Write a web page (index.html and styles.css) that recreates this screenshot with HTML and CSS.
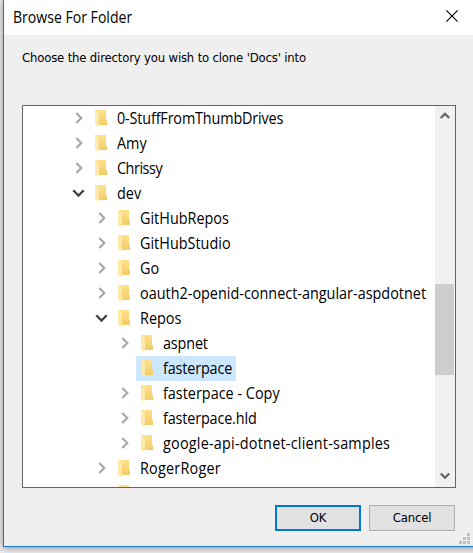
FILE: index.html
```html
<!DOCTYPE html>
<html lang="en">
<head>
<meta charset="utf-8">
<title>Browse For Folder</title>
<link rel="stylesheet" href="styles.css">
</head>
<body>
<svg class="defs" width="0" height="0" aria-hidden="true">
  <defs>
    <linearGradient id="gold" x1="0" y1="0" x2="0" y2="1"><stop offset="0" stop-color="#ffe18a"/><stop offset="1" stop-color="#f1cd69"/></linearGradient>
    <symbol id="folder" viewBox="0 0 12 17"><path d="M0 0h11v10h1v5H2z" fill="url(#gold)"/><path d="M0 0l4 2.300v12L3 17 0 14.500z" fill="#ffe9a9"/></symbol>
    <symbol id="closed" viewBox="0 0 14 14"><path d="M4.300 2l5 5-5 5" fill="none" stroke="#a6a6a6" stroke-width="2.100"/></symbol>
    <symbol id="open" viewBox="0 0 14 14"><path d="M1.300 4.300L6.500 9.500l5.200-5.200" fill="none" stroke="#404040" stroke-width="2.300"/></symbol>
  </defs>
</svg>
<div class="dialog">
  <header class="titlebar">
    <h1 class="title">Browse For Folder</h1>
    <svg class="close" width="12" height="12" viewBox="0 0 12 12"><path d="M.3.3l11.400 11.400M11.700.3L.3 11.700" stroke="#000" stroke-width="1.100"/></svg>
  </header>
  <main class="content">
    <p class="prompt">Choose the directory you wish to clone 'Docs' into</p>
    <div class="tree">
      <ul class="rows">
        <li class="row"><svg class="arrow"><use href="#closed"/></svg><span class="item"><svg class="folder"><use href="#folder"/></svg><span class="name tight">0-StuffFromThumbDrives</span></span></li>
        <li class="row"><svg class="arrow"><use href="#closed"/></svg><span class="item"><svg class="folder"><use href="#folder"/></svg><span class="name">Amy</span></span></li>
        <li class="row"><svg class="arrow"><use href="#closed"/></svg><span class="item"><svg class="folder"><use href="#folder"/></svg><span class="name tight-more">Chrissy</span></span></li>
        <li class="row"><svg class="arrow"><use href="#open"/></svg><span class="item"><svg class="folder"><use href="#folder"/></svg><span class="name">dev</span></span></li>
        <li class="row l1"><svg class="arrow"><use href="#closed"/></svg><span class="item"><svg class="folder"><use href="#folder"/></svg><span class="name">GitHubRepos</span></span></li>
        <li class="row l1"><svg class="arrow"><use href="#closed"/></svg><span class="item"><svg class="folder"><use href="#folder"/></svg><span class="name">GitHubStudio</span></span></li>
        <li class="row l1"><svg class="arrow"><use href="#closed"/></svg><span class="item"><svg class="folder"><use href="#folder"/></svg><span class="name">Go</span></span></li>
        <li class="row l1"><svg class="arrow"><use href="#closed"/></svg><span class="item"><svg class="folder"><use href="#folder"/></svg><span class="name">oauth2-openid-connect-angular-aspdotnet</span></span></li>
        <li class="row l1"><svg class="arrow"><use href="#open"/></svg><span class="item"><svg class="folder"><use href="#folder"/></svg><span class="name">Repos</span></span></li>
        <li class="row l2"><svg class="arrow"><use href="#closed"/></svg><span class="item"><svg class="folder"><use href="#folder"/></svg><span class="name tight">aspnet</span></span></li>
        <li class="row l2"><svg class="arrow"></svg><span class="item selected"><svg class="folder"><use href="#folder"/></svg><span class="name tight">fasterpace</span></span></li>
        <li class="row l2"><svg class="arrow"><use href="#closed"/></svg><span class="item"><svg class="folder"><use href="#folder"/></svg><span class="name">fasterpace - Copy</span></span></li>
        <li class="row l2"><svg class="arrow"><use href="#closed"/></svg><span class="item"><svg class="folder"><use href="#folder"/></svg><span class="name tight">fasterpace.hld</span></span></li>
        <li class="row l2"><svg class="arrow"><use href="#closed"/></svg><span class="item"><svg class="folder"><use href="#folder"/></svg><span class="name loose">google-api-dotnet-client-samples</span></span></li>
        <li class="row l1"><svg class="arrow"><use href="#closed"/></svg><span class="item"><svg class="folder"><use href="#folder"/></svg><span class="name loose">RogerRoger</span></span></li>
        <li class="row l1"><svg class="arrow"></svg><span class="item"><svg class="folder"><use href="#folder"/></svg></span></li>
      </ul>
      <div class="scrollbar">
        <svg class="up" width="10" height="8" viewBox="0 0 10 8"><path d="M.8 6L5 1.800 9.200 6" fill="none" stroke="#606060" stroke-width="2.200"/></svg>
        <div class="thumb"></div>
        <svg class="down" width="10" height="8" viewBox="0 0 10 8"><path d="M.8 1.500L5 5.700 9.200 1.500" fill="none" stroke="#606060" stroke-width="2.200"/></svg>
      </div>
    </div>
    <div class="actions">
      <button class="button primary">OK</button>
      <button class="button">Cancel</button>
    </div>
  </main>
  <svg class="grip" width="11" height="11" viewBox="0 0 11 11" fill="#bfbfbf"><path d="M8 0h3v3H8zM4 4h3v3H4zM8 4h3v3H8zM0 8h3v3H0zM4 8h3v3H4zM8 8h3v3H8z"/></svg>
</div>
</body>
</html>
```
FILE: styles.css
```css
* { box-sizing: border-box; }
body { margin: 0; width: 473px; height: 553px; overflow: hidden; background: #ececec; padding-left: 3px; }
.defs { position: absolute; }
.dialog {
  position: relative;
  width: 480px;
  height: 547px;
  border: 1px solid #1979ca;
  border-top: 0;
  background: #efefef;
  box-shadow: 0 1px 7px rgba(0, 0, 0, .4);
}
.titlebar { display: flex; align-items: center; justify-content: space-between; height: 35px; padding: 0 15px 3px 9px; width: 473px; background: #fff; }
.title { margin: 0; font: 400 15.5px/30px "Open Sans", sans-serif; transform: translateY(.5px) scaleX(.908); transform-origin: left; white-space: nowrap; }
.close { margin-right: 4px; }
.content { padding: 14px 0 0 18px; width: 469px; }
.prompt { margin: 0; height: 56px; font: 13px/18px "DejaVu Sans Condensed", "DejaVu Sans", sans-serif; font-stretch: condensed; letter-spacing: -.18px; white-space: nowrap; }
.tree { display: flex; width: 434px; height: 383px; border: 1px solid #646464; background: #fff; }
.rows { flex: 1; min-width: 0; height: 381px; margin: 0; padding: 0; overflow: hidden; list-style: none; }
.row { display: flex; align-items: center; height: 25px; padding-left: 49px; }
.l1 { padding-left: 72px; }
.l2 { padding-left: 95px; }
.arrow { flex: none; width: 14px; height: 14px; margin-bottom: 1px; }
.item { display: flex; align-items: center; height: 25px; margin-left: 4px; padding: 0 0 0 5px; }
.selected { width: 100px; background: #cce8ff; }
.folder { flex: none; width: 12px; height: 17px; margin-right: 10px; }
.name { font: 15.5px/25px "Open Sans", sans-serif; color: #000; white-space: nowrap; transform: scaleX(.93); transform-origin: left; }
.tight { letter-spacing: -.17px; }
.tight-more { letter-spacing: -.5px; }
.loose { letter-spacing: .23px; }
.scrollbar { display: flex; flex-direction: column; align-items: center; width: 20px; padding: 6px 1px 7px 0; background: #f0f0f0; }
.thumb { width: 19px; height: 91px; margin-top: 164px; background: #cdcdcd; }
.down { margin-top: auto; }
.actions { display: flex; gap: 8px; margin: 17px 0 0 253px; }
.button { width: 86px; height: 26px; padding: 0; border: 1px solid #adadad; border-radius: 0; background: #e1e1e1; color: #000; font: 13px/22px "DejaVu Sans Condensed", "DejaVu Sans", sans-serif; font-stretch: condensed; letter-spacing: -.18px; }
.primary { border: 2px solid #0078d7; }
.grip { position: absolute; left: 455px; top: 533px; }
```
